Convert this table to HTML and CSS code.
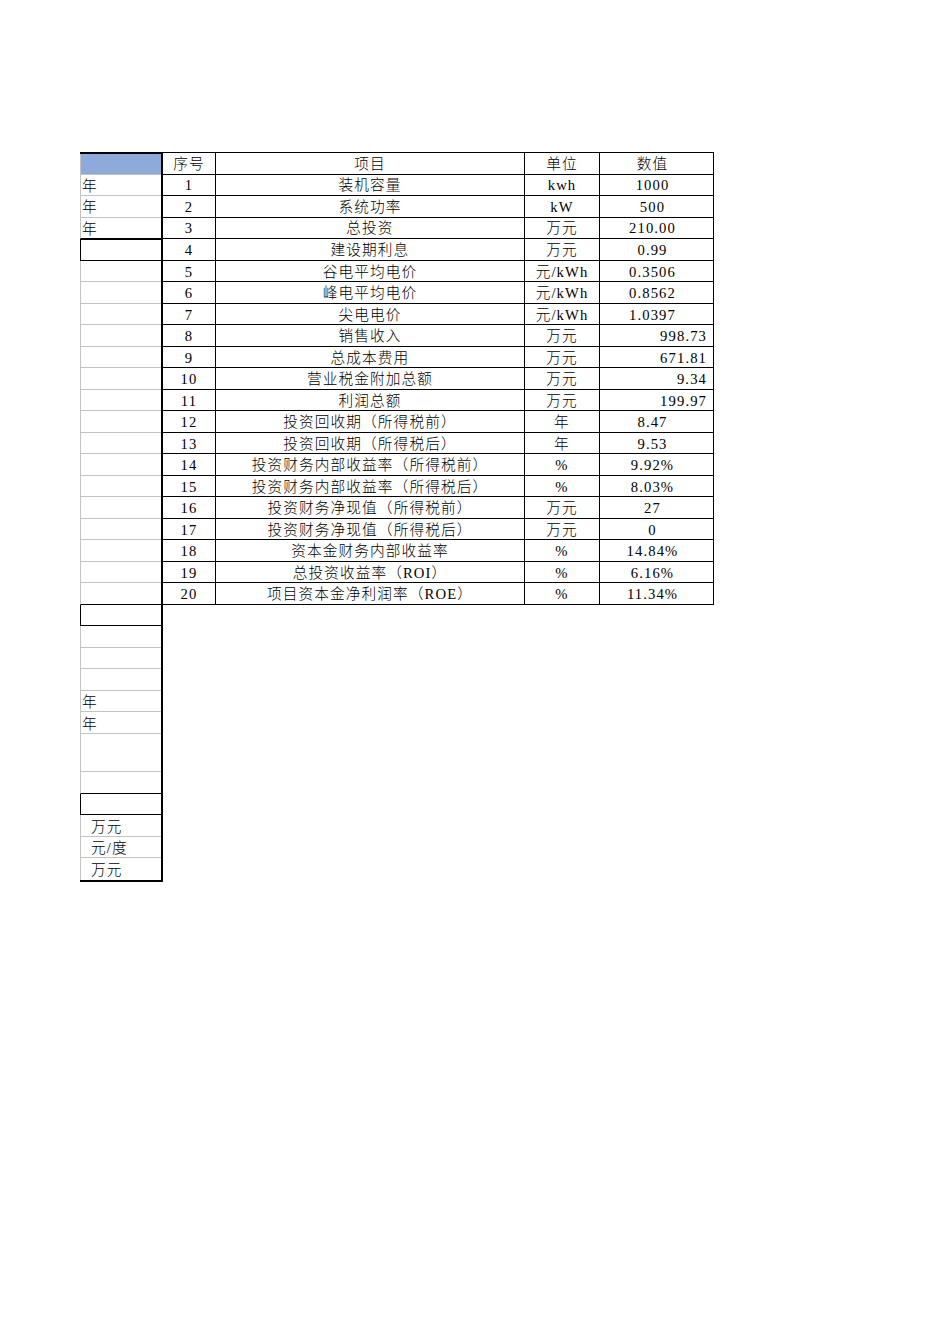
FILE: index.html
```html
<!DOCTYPE html>
<html lang="zh-CN">
<head>
<meta charset="utf-8">
<title>项目经济指标</title>
<link rel="stylesheet" href="styles.css">
</head>
<body>
<div class="sheet">
  <div class="left">
    <div class="lc blue"></div>
    <div class="lc">年</div>
    <div class="lc">年</div>
    <div class="lc pre">年</div>
    <div class="lc box thick"></div>
    <div class="lc"></div>
    <div class="lc"></div>
    <div class="lc"></div>
    <div class="lc"></div>
    <div class="lc"></div>
    <div class="lc"></div>
    <div class="lc"></div>
    <div class="lc"></div>
    <div class="lc"></div>
    <div class="lc"></div>
    <div class="lc"></div>
    <div class="lc"></div>
    <div class="lc"></div>
    <div class="lc"></div>
    <div class="lc"></div>
    <div class="lc pre"></div>
    <div class="lc box"></div>
    <div class="lc"></div>
    <div class="lc"></div>
    <div class="lc"></div>
    <div class="lc">年</div>
    <div class="lc">年</div>
    <div class="lc tall"></div>
    <div class="lc pre"></div>
    <div class="lc box"></div>
    <div class="lc ind">万元</div>
    <div class="lc ind">元/度</div>
    <div class="lc ind last">万元</div>
  </div>
  <div class="main">
    <div class="c">序号</div><div class="c">项目</div><div class="c">单位</div><div class="c v">数值</div>
    <div class="c">1</div><div class="c">装机容量</div><div class="c">kwh</div><div class="c v">1000</div>
    <div class="c">2</div><div class="c">系统功率</div><div class="c">kW</div><div class="c v">500</div>
    <div class="c">3</div><div class="c">总投资</div><div class="c">万元</div><div class="c v">210.00</div>
    <div class="c">4</div><div class="c">建设期利息</div><div class="c">万元</div><div class="c v">0.99</div>
    <div class="c">5</div><div class="c">谷电平均电价</div><div class="c">元/kWh</div><div class="c v">0.3506</div>
    <div class="c">6</div><div class="c">峰电平均电价</div><div class="c">元/kWh</div><div class="c v">0.8562</div>
    <div class="c">7</div><div class="c">尖电电价</div><div class="c">元/kWh</div><div class="c v">1.0397</div>
    <div class="c">8</div><div class="c">销售收入</div><div class="c">万元</div><div class="c r">998.73</div>
    <div class="c">9</div><div class="c">总成本费用</div><div class="c">万元</div><div class="c r">671.81</div>
    <div class="c">10</div><div class="c">营业税金附加总额</div><div class="c">万元</div><div class="c r">9.34</div>
    <div class="c">11</div><div class="c">利润总额</div><div class="c">万元</div><div class="c r">199.97</div>
    <div class="c">12</div><div class="c">投资回收期（所得税前）</div><div class="c">年</div><div class="c v">8.47</div>
    <div class="c">13</div><div class="c">投资回收期（所得税后）</div><div class="c">年</div><div class="c v">9.53</div>
    <div class="c">14</div><div class="c">投资财务内部收益率（所得税前）</div><div class="c">%</div><div class="c v">9.92%</div>
    <div class="c">15</div><div class="c">投资财务内部收益率（所得税后）</div><div class="c">%</div><div class="c v">8.03%</div>
    <div class="c">16</div><div class="c">投资财务净现值（所得税前）</div><div class="c">万元</div><div class="c v">27</div>
    <div class="c">17</div><div class="c">投资财务净现值（所得税后）</div><div class="c">万元</div><div class="c v">0</div>
    <div class="c">18</div><div class="c">资本金财务内部收益率</div><div class="c">%</div><div class="c v">14.84%</div>
    <div class="c">19</div><div class="c">总投资收益率（ROI）</div><div class="c">%</div><div class="c v">6.16%</div>
    <div class="c">20</div><div class="c">项目资本金净利润率（ROE）</div><div class="c">%</div><div class="c v">11.34%</div>
  </div>
</div>
</body>
</html>
```
FILE: styles.css
```css
html, body {
  margin: 0;
  padding: 0;
  background: #ffffff;
}

body {
  font-family: "Liberation Serif", "Noto Sans CJK SC", serif;
  font-size: 14.67px;
  font-weight: 300;
  color: #000000;
  letter-spacing: 1.1px;
}

.sheet {
  display: flex;
  align-items: flex-start;
  padding: 152px 0 0 80px;
}

.left {
  width: 81px;
  border-top: 2px solid #000000;
  border-right: 2px solid #000000;
  border-bottom: 2px solid #000000;
  display: flex;
  flex-direction: column;
}

.lc {
  box-sizing: border-box;
  height: 21.52px;
  border-left: 1px solid #c3c3c3;
  border-bottom: 1px solid #c3c3c3;
  display: flex;
  align-items: center;
  padding-left: 1px;
  padding-top: 3px;
  line-height: 1;
  white-space: nowrap;
}

.lc.blue {
  height: 20.52px;
  background: #8eaadb;
}

.lc.pre {
  border-bottom-color: #000000;
}

.lc.box {
  border-left-color: #000000;
  border-bottom-color: #000000;
}

.lc.thick {
  border-top: 1px solid #000000;
}

.lc.tall {
  height: 38.4px;
}

.lc.ind {
  padding-left: 10px;
}

.lc.last {
  border-bottom: none;
}

.main {
  display: grid;
  grid-template-columns: 53px 309px 75px 114px;
  grid-auto-rows: 21.52px;
  border-top: 1px solid #000000;
}

.c {
  box-sizing: border-box;
  border-right: 1px solid #000000;
  border-bottom: 1px solid #000000;
  display: flex;
  align-items: center;
  justify-content: center;
  padding-top: 2px;
  line-height: 1;
  white-space: nowrap;
}

.c.v {
  padding-right: 8px;
}

.c.r {
  justify-content: flex-end;
  padding-right: 6px;
}
```
